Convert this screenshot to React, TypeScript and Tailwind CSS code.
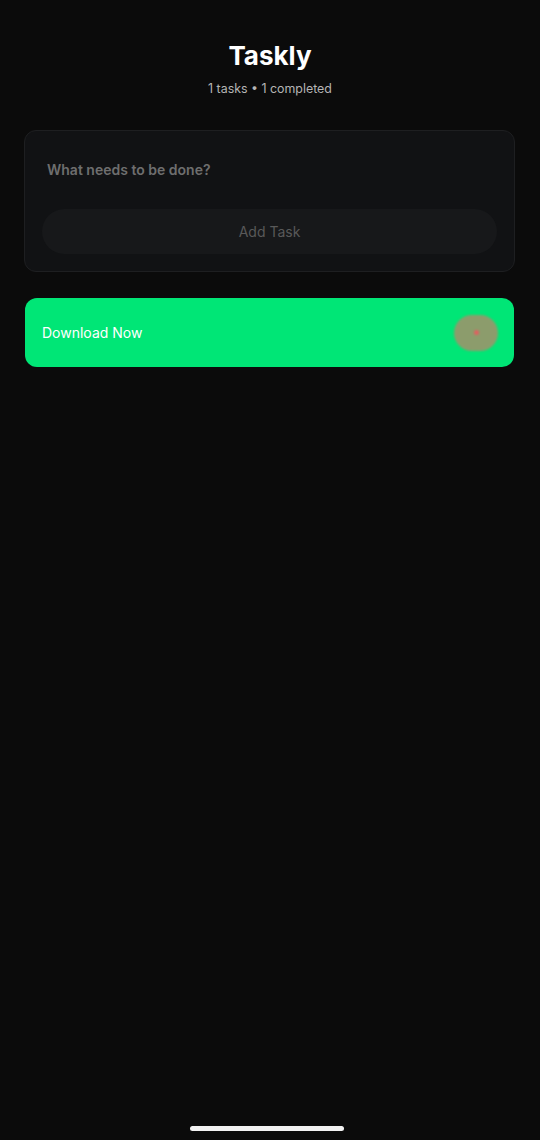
export default function App() {
  return (
    <div className="w-[540px] h-[1140px] bg-[#0b0b0b] flex flex-col items-center font-['Inter',sans-serif] relative overflow-hidden">
      <h1 className="mt-[40px] text-[26px] leading-[32px] font-bold text-white">Taskly</h1>
      <p className="mt-[9px] text-[12.4px] leading-[16px] text-[#b5b5b5]">1 tasks • 1 completed</p>

      <div className="mt-[33px] w-[491px] ml-[-1px] rounded-[12px] bg-[#111214] border border-[#1e1f21] px-[17px] pt-[29px] pb-[17px] flex flex-col">
        <div className="pl-[5px] text-[14px] leading-[20px] font-semibold text-[#6e6e6e]">What needs to be done?</div>
        <div className="mt-[29px] h-[45px] rounded-full bg-[#17181a] flex items-center justify-center text-[14px] text-[#595959]">Add Task</div>
      </div>

      <div className="mt-[26px] w-[489px] ml-[-1px] h-[69px] rounded-[12px] bg-[#00e676] flex items-center justify-between pl-[17px] pr-[16px]">
        <span className="text-[14px] text-white">Download Now</span>
        <div className="w-[44px] h-[36px] rounded-full bg-[#8c9c6c] blur-[1px] flex items-center justify-center">
          <div className="w-[5px] h-[5px] rounded-full bg-[#e06060]" />
        </div>
      </div>

      <div className="absolute bottom-[9px] left-[190px] w-[154px] h-[5px] rounded-full bg-[#f2f2f2]" />
    </div>
  );
}
